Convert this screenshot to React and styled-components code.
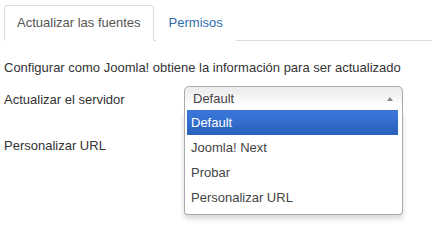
import React from "react";
import styled, { createGlobalStyle } from "styled-components";

const Global = createGlobalStyle`
  html, body { margin: 0; padding: 0; background: #fff; }
  html, body, #root { min-height: 243px; }
  body {
    font-family: "Liberation Sans", Arial, sans-serif;
    font-size: 13px;
    line-height: 18px;
    color: #333;
  }
`;

const Page = styled.div`
  padding: 5px 0 0 4px;
  width: 428px;
  min-height: 238px;
`;

const Tabs = styled.ul`
  display: flex;
  list-style: none;
  margin: 0;
  padding: 0;
  border-bottom: 1px solid #ddd;
`;

const Tab = styled.li`
  margin: 0 2px -1px 0;
  padding: 8px 12px;
  line-height: 18px;
  border: 1px solid ${(p) => (p.$active ? "#ddd" : "transparent")};
  border-bottom-color: ${(p) => (p.$active ? "#fff" : "transparent")};
  border-radius: 4px 4px 0 0;
  background: #fff;
  color: ${(p) => (p.$active ? "#555" : "#2f6db0")};
`;

const Description = styled.p`
  margin: 18px 0 9px;
`;

const Row = styled.div`
  display: flex;
  align-items: flex-start;
  margin-bottom: ${(p) => p.$gap || 0}px;
`;

const Label = styled.label`
  width: 180px;
  padding-top: 5px;
  line-height: 18px;
`;

const SelectWrap = styled.div`
  position: relative;
  width: 219px;
`;

const Single = styled.div`
  position: relative;
  height: 23px;
  line-height: 24px;
  padding-left: 8px;
  border: 1px solid #aaa;
  border-radius: 5px 5px 0 0;
  background: linear-gradient(#eee 20%, #fff 80%);
  color: #444;
`;

const Arrow = styled.span`
  position: absolute;
  right: 9px;
  top: 10px;
  width: 0;
  height: 0;
  border-left: 3px solid transparent;
  border-right: 3px solid transparent;
  border-bottom: 4px solid #888;
`;

const Drop = styled.ul`
  position: absolute;
  left: 0;
  right: 0;
  top: 100%;
  margin: -1px 0 0;
  padding: 0 0 0 2px;
  list-style: none;
  background: #fff;
  border: 1px solid #aaa;
  border-top: 0;
  border-radius: 0 0 4px 4px;
  box-shadow: 0 4px 5px rgba(0, 0, 0, 0.15);
  z-index: 5;
`;

const Results = styled.div`
  margin: 0 4px 4px 0;
`;

const Option = styled.li`
  padding: 5px 4px;
  line-height: 15px;
  color: ${(p) => (p.$hl ? "#fff" : "#444")};
  background: ${(p) =>
    p.$hl ? "linear-gradient(#3875d7 20%, #2a62bc 90%)" : "transparent"};
`;

const options = ["Default", "Joomla! Next", "Probar", "Personalizar URL"];

export default function App() {
  return (
    <>
      <Global />
      <Page>
        <Tabs>
          <Tab $active>Actualizar las fuentes</Tab>
          <Tab>Permisos</Tab>
        </Tabs>
        <Description>
          Configurar como Joomla! obtiene la información para ser actualizado
        </Description>
        <Row $gap={21}>
          <Label>Actualizar el servidor</Label>
          <SelectWrap>
            <Single>
              Default
              <Arrow />
            </Single>
            <Drop>
              <Results>
                {options.map((o, i) => (
                  <Option key={o} $hl={i === 0}>
                    {o}
                  </Option>
                ))}
              </Results>
            </Drop>
          </SelectWrap>
        </Row>
        <Row>
          <Label>Personalizar URL</Label>
        </Row>
      </Page>
    </>
  );
}
